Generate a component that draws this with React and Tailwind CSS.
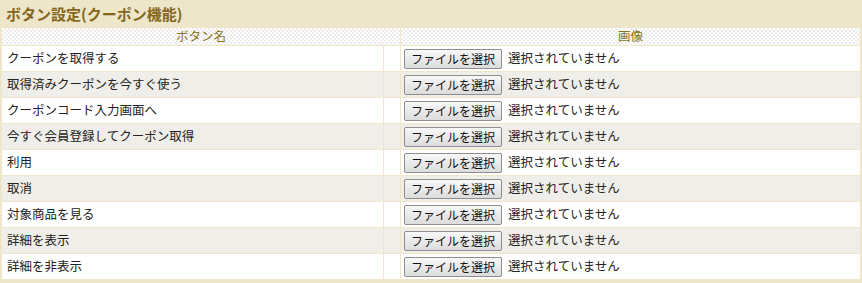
import React from "react";

const rows = [
  "クーポンを取得する",
  "取得済みクーポンを今すぐ使う",
  "クーポンコード入力画面へ",
  "今すぐ会員登録してクーポン取得",
  "利用",
  "取消",
  "対象商品を見る",
  "詳細を表示",
  "詳細を非表示",
];

export default function App() {
  return (
    <div
      className="w-[862px] h-[283px] bg-[#ede6c9] text-[12.5px] text-[#222]"
      style={{ fontFamily: '"Noto Sans CJK JP", "Noto Sans", sans-serif' }}
    >
      <div className="h-[27px] pl-[6px] flex items-center text-[15px] font-bold text-[#86661c] leading-none">
        ボタン設定(クーポン機能)
      </div>
      <div className="px-[1px]">
        <table className="w-[860px] border-separate border-spacing-[1px] bg-[#f0e7cb] table-fixed">
          <colgroup>
            <col className="w-[381px]" />
            <col className="w-[16px]" />
            <col />
          </colgroup>
          <thead>
            <tr>
              <th
                colSpan={2}
                className="h-[17px] p-0 font-normal text-[12.5px] leading-none text-[#86741c] bg-[repeating-conic-gradient(#ececec_0_25%,#ffffff_0_50%)] bg-[length:4px_4px]"
              >
                ボタン名
              </th>
              <th className="h-[17px] p-0 font-normal text-[12.5px] leading-none text-[#86741c] bg-[repeating-conic-gradient(#ececec_0_25%,#ffffff_0_50%)] bg-[length:4px_4px]">
                画像
              </th>
            </tr>
          </thead>
          <tbody>
            {rows.map((r, i) => {
              const bg = i % 2 === 0 ? "bg-white" : "bg-[#efeee9]";
              return (
                <tr key={i}>
                  <td className={`h-[25px] p-0 pl-[5px] whitespace-nowrap leading-none ${bg}`}>{r}</td>
                  <td className={`h-[25px] p-0 ${bg}`}></td>
                  <td className={`h-[25px] p-0 pl-[3px] ${bg}`}>
                    <div className="flex items-center gap-[6px] leading-none">
                      <span className="h-[20px] w-[98px] flex items-center justify-center border border-[#8e8e8e] rounded-[2px] bg-[linear-gradient(#f8f8f8,#dcdcdc)] text-[12px] text-[#111]">
                        ファイルを選択
                      </span>
                      <span className="whitespace-nowrap">選択されていません</span>
                    </div>
                  </td>
                </tr>
              );
            })}
          </tbody>
        </table>
      </div>
    </div>
  );
}
